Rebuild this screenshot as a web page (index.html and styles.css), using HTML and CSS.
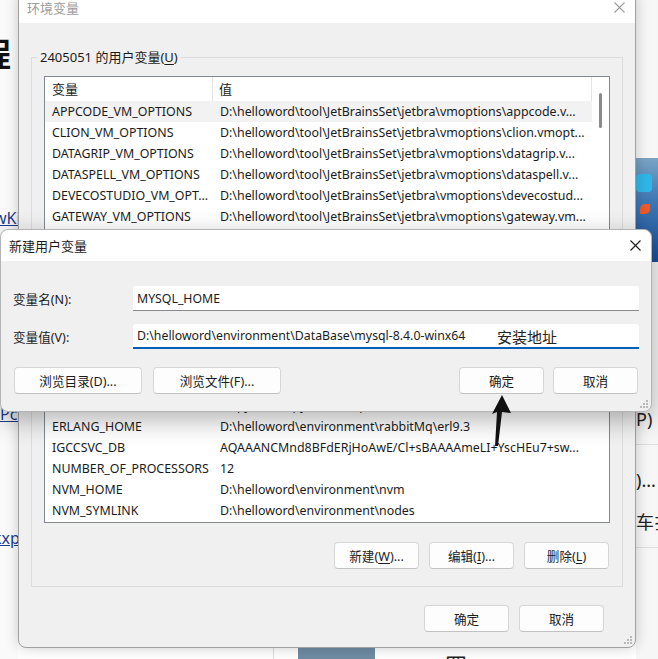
FILE: index.html
```html
<!DOCTYPE html>
<html lang="zh-CN">
<head>
  <meta charset="UTF-8" />
  <title>环境变量</title>
  <link rel="stylesheet" href="styles.css">
</head>
<body>
  <div class="desktop">
    <!-- page behind the dialogs -->
    <div class="bg-page">
      <div class="bg-left">
        <span class="bg-heading">程</span>
        <a class="bg-link link-1">wKi</a>
        <a class="bg-link link-2">Pcr</a>
        <a class="bg-link link-3">kxp</a>
      </div>
      <div class="bg-mid">
        <div class="bg-bottom">
          <span class="bg-rule"></span>
          <span class="bg-thumb"></span>
          <span class="bg-word">四 ⋯</span>
        </div>
      </div>
      <div class="bg-right">
        <div class="bg-pic"><span class="pic-cyan"></span><span class="pic-orange"></span></div>
        <span class="bg-text text-1">P)</span>
        <span class="bg-hr"></span>
        <span class="bg-text text-2">)...</span>
        <span class="bg-text text-3">车扌</span>
        <span class="bg-hr"></span>
      </div>
    </div>

    <!-- 环境变量 window -->
    <section class="window env-window">
      <header class="title-bar">
        <span class="title inactive">环境变量</span>
        <svg class="close-x inactive" width="11" height="11" viewBox="0 0 11 11"><path d="M0.5 0.5L10.5 10.5M10.5 0.5L0.5 10.5"/></svg>
      </header>
      <div class="env-body">
        <fieldset class="group">
          <legend>2405051 的用户变量(<u>U</u>)</legend>
          <div class="var-list">
            <div class="var-table">
              <div class="var-head">
                <span class="col-name">变量</span>
                <span class="col-value">值</span>
              </div>
              <div class="var-row active"><span class="col-name">APPCODE_VM_OPTIONS</span><span class="col-value">D:\helloword\tool\JetBrainsSet\jetbra\vmoptions\appcode.v...</span></div>
              <div class="var-row"><span class="col-name">CLION_VM_OPTIONS</span><span class="col-value">D:\helloword\tool\JetBrainsSet\jetbra\vmoptions\clion.vmopt...</span></div>
              <div class="var-row"><span class="col-name">DATAGRIP_VM_OPTIONS</span><span class="col-value">D:\helloword\tool\JetBrainsSet\jetbra\vmoptions\datagrip.v...</span></div>
              <div class="var-row"><span class="col-name">DATASPELL_VM_OPTIONS</span><span class="col-value">D:\helloword\tool\JetBrainsSet\jetbra\vmoptions\dataspell.v...</span></div>
              <div class="var-row"><span class="col-name">DEVECOSTUDIO_VM_OPT...</span><span class="col-value">D:\helloword\tool\JetBrainsSet\jetbra\vmoptions\devecostud...</span></div>
              <div class="var-row"><span class="col-name">GATEWAY_VM_OPTIONS</span><span class="col-value">D:\helloword\tool\JetBrainsSet\jetbra\vmoptions\gateway.vm...</span></div>
              <div class="var-row"><span class="col-name">GOLAND_VM_OPTIONS</span><span class="col-value">D:\helloword\tool\JetBrainsSet\jetbra\vmoptions\goland.vm...</span></div>
              <div class="var-row"><span class="col-name">IDEA_VM_OPTIONS</span><span class="col-value">D:\helloword\tool\JetBrainsSet\jetbra\vmoptions\idea.vmopti...</span></div>
              <div class="var-row"><span class="col-name">JETBRAINSCLIENT_VM_...</span><span class="col-value">D:\helloword\tool\JetBrainsSet\jetbra\vmoptions\jetbrainscl...</span></div>
              <div class="var-row"><span class="col-name">JETBRAINS_CLIENT_VM...</span><span class="col-value">D:\helloword\tool\JetBrainsSet\jetbra\vmoptions\jetbrains_c...</span></div>
              <div class="var-row"><span class="col-name">PHPSTORM_VM_OPTIONS</span><span class="col-value">D:\helloword\tool\JetBrainsSet\jetbra\vmoptions\phpstorm.v...</span></div>
              <div class="var-row"><span class="col-name">PYCHARM_VM_OPTIONS</span><span class="col-value">D:\helloword\tool\JetBrainsSet\jetbra\vmoptions\pycharm.v...</span></div>
              <div class="var-row"><span class="col-name">RIDER_VM_OPTIONS</span><span class="col-value">D:\helloword\tool\JetBrainsSet\jetbra\vmoptions\rider.vmopt...</span></div>
              <div class="var-row"><span class="col-name">RUBYMINE_VM_OPTIONS</span><span class="col-value">D:\helloword\tool\JetBrainsSet\jetbra\vmoptions\rubymine.v...</span></div>
              <div class="var-row"><span class="col-name">Path</span><span class="col-value">D:\pycharm\python\Scripts;D:\helloword\environment\...</span></div>
              <div class="var-row"><span class="col-name">ERLANG_HOME</span><span class="col-value">D:\helloword\environment\rabbitMq\erl9.3</span></div>
              <div class="var-row"><span class="col-name">IGCCSVC_DB</span><span class="col-value">AQAAANCMnd8BFdERjHoAwE/Cl+sBAAAAmeLI+YscHEu7+sw...</span></div>
              <div class="var-row"><span class="col-name">NUMBER_OF_PROCESSORS</span><span class="col-value">12</span></div>
              <div class="var-row"><span class="col-name">NVM_HOME</span><span class="col-value">D:\helloword\environment\nvm</span></div>
              <div class="var-row"><span class="col-name">NVM_SYMLINK</span><span class="col-value">D:\helloword\environment\nodes</span></div>
            </div>
            <div class="scrollbar"><span class="thumb"></span></div>
          </div>
          <div class="btn-row">
            <button class="btn">新建(<u>W</u>)...</button>
            <button class="btn">编辑(<u>I</u>)...</button>
            <button class="btn">删除(<u>L</u>)</button>
          </div>
        </fieldset>
        <div class="btn-row footer-row">
          <button class="btn">确定</button>
          <button class="btn">取消</button>
        </div>
      </div>
      <svg class="grip" width="8" height="8" viewBox="0 0 8 8"><path d="M6 0h2v2H6zM3 3h2v2H3zM6 3h2v2H6zM0 6h2v2H0zM3 6h2v2H3zM6 6h2v2H6z"/></svg>
    </section>

    <!-- 新建用户变量 dialog -->
    <section class="window new-var">
      <header class="title-bar">
        <span class="title">新建用户变量</span>
        <svg class="close-x" width="11" height="11" viewBox="0 0 11 11"><path d="M0.5 0.5L10.5 10.5M10.5 0.5L0.5 10.5"/></svg>
      </header>
      <div class="dialog-body">
        <div class="form-row">
          <label for="varName">变量名(N):</label>
          <input type="text" id="varName" value="MYSQL_HOME" />
        </div>
        <div class="form-row">
          <label for="varValue">变量值(V):</label>
          <input type="text" id="varValue" class="focused" value="D:\helloword\environment\DataBase\mysql-8.4.0-winx64" />
        </div>
        <div class="dialog-buttons">
          <div class="btn-group">
            <button class="btn wide">浏览目录(D)...</button>
            <button class="btn wide">浏览文件(F)...</button>
          </div>
          <div class="btn-group tight">
            <button class="btn">确定</button>
            <button class="btn">取消</button>
          </div>
        </div>
      </div>
      <span class="note">安装地址</span>
      <svg class="grip" width="8" height="8" viewBox="0 0 8 8"><path d="M6 0h2v2H6zM3 3h2v2H3zM6 3h2v2H6zM0 6h2v2H0zM3 6h2v2H3zM6 6h2v2H6z"/></svg>
    </section>

    <svg class="arrow" width="30" height="60" viewBox="0 0 30 60">
      <polygon points="14,5 23,23 14,22 10,56 7,56 9,22 4,24" />
    </svg>
  </div>
</body>
</html>
```

FILE: styles.css
```css
* { box-sizing: border-box; }
html, body { margin: 0; padding: 0; }
body {
  width: 658px;
  height: 659px;
  overflow: hidden;
  background: #fff;
  font-family: "Noto Sans", "Noto Sans CJK SC", sans-serif;
  font-size: 13px;
  color: #1b1b1b;
}
u { text-underline-offset: 2px; }
.desktop {
  position: relative;
  width: 658px;
  height: 659px;
  overflow: hidden;
}

/* background page */
.bg-page {
  position: absolute;
  inset: 0;
  display: flex;
}
.bg-left {
  width: 18px;
  overflow: hidden;
  display: flex;
  flex-direction: column;
  background: #fafafa;
}
.bg-heading {
  margin: 34px 0 0 -21px;
  font-family: "Noto Sans CJK SC", sans-serif;
  font-size: 32px;
  font-weight: 700;
  line-height: 36px;
  color: #111;
}
.bg-link {
  color: #1f3b8c;
  text-decoration: underline;
  font-size: 16px;
  line-height: 20px;
  white-space: nowrap;
}
.link-1 { margin: 138px 0 0 -6px; }
.link-2 { margin: 176px 0 0 0; }
.link-3 { margin: 104px 0 0 -7px; }
.bg-mid {
  flex: 1;
  display: flex;
  flex-direction: column;
  justify-content: flex-end;
}
.bg-bottom {
  height: 11px;
  display: flex;
  overflow: hidden;
}
.bg-rule { width: 1px; margin-left: 255px; background: #ddd; }
.bg-thumb { width: 77px; margin-left: 24px; background: #6f8ca3; }
.bg-word {
  margin-left: 70px;
  font-family: "Noto Sans CJK SC", sans-serif;
  font-size: 22px;
  line-height: 30px;
  color: #222;
}
.bg-right {
  width: 22px;
  overflow: hidden;
  display: flex;
  flex-direction: column;
  background: #f6f6f6;
}
.bg-pic {
  height: 104px;
  margin-top: 158px;
  background: linear-gradient(180deg, #7aa3c4 0%, #3f78b3 40%, #1b4f98 100%);
  display: flex;
  flex-direction: column;
}
.pic-cyan { height: 18px; width: 16px; margin-top: 16px; border-radius: 4px; background: #2fb6e8; }
.pic-orange { height: 10px; width: 10px; margin: 12px 0 0 4px; border-radius: 50% 0; background: #ee5a2a; }
.bg-text {
  font-size: 18px;
  line-height: 22px;
  white-space: nowrap;
  color: #222;
  font-family: "Noto Sans", "Noto Sans CJK SC", sans-serif;
}
.text-1 { margin-top: 146px; }
.bg-hr { height: 1px; margin-top: 14px; background: #ddd; }
.text-2 { margin-top: 24px; }
.text-3 { margin-top: 20px; }

/* windows */
.window {
  position: absolute;
  display: flex;
  flex-direction: column;
  background: #f0f0f0;
  border: 1px solid #a0a0a0;
  border-radius: 8px;
}
.title-bar {
  flex: none;
  height: 31px;
  display: flex;
  align-items: center;
  justify-content: space-between;
  padding: 0 10px 0 8px;
  background: #fff;
  border-radius: 8px 8px 0 0;
}
.title { font-size: 13px; }
.close-x { stroke: #1b1b1b; stroke-width: 1.1; fill: none; }
.inactive { color: #9c9c9c; stroke: #9c9c9c; }
.grip {
  position: absolute;
  right: 3px;
  bottom: 3px;
  fill: #b8b8b8;
}

.env-window {
  left: 18px;
  top: -9px;
  width: 618px;
  height: 657px;
  box-shadow: 0 0 14px rgba(0, 0, 0, 0.2);
}
.env-body {
  flex: 1;
  display: flex;
  flex-direction: column;
  padding: 26px 12px 0 12px;
}
.group {
  margin: 0;
  min-width: 0;
  padding: 10px 12px 17px 12px;
  border: 1px solid #dcdcdc;
}
.group legend {
  padding: 0 3px;
  margin-left: -7px;
  font-size: 13px;
  line-height: 17px;
}
.var-list {
  height: 447px;
  display: flex;
  background: #fff;
  border: 1px solid #828790;
  overflow: hidden;
  font-size: 12.4px;
}
.var-table {
  flex: 1;
  min-width: 0;
  display: flex;
  flex-direction: column;
}
.var-head, .var-row {
  display: flex;
  align-items: center;
  flex: none;
  white-space: nowrap;
}
.var-head { height: 24px; font-size: 13px; }
.var-row { height: 21px; }
.var-row.active { background: #f2f2f2; }
.col-name {
  width: 168px;
  flex: none;
  padding-left: 7px;
  overflow: hidden;
}
.col-value {
  flex: 1;
  min-width: 0;
  padding-left: 7px;
  overflow: hidden;
}
.var-head span { height: 24px; line-height: 24px; }
.var-head .col-name { border-right: 1px solid #e5e5e5; }
.var-head .col-value { border-right: 1px solid #e5e5e5; padding-left: 6px; }
.scrollbar {
  width: 17px;
  flex: none;
  display: flex;
  flex-direction: column;
}
.thumb {
  width: 3px;
  height: 35px;
  margin: 16px 0 0 7px;
  border-radius: 2px;
  background: #8a8a8a;
}

.btn-row {
  display: flex;
  justify-content: flex-end;
  gap: 10px;
  margin: 19px 1px 0 0;
}
.footer-row { margin: 18px 19px 0 0; }
.btn {
  width: 85px;
  height: 27px;
  padding: 0;
  font-family: "Noto Sans", "Noto Sans CJK SC", sans-serif;
  font-size: 12.6px;
  color: #1b1b1b;
  background: #fdfdfd;
  border: 1px solid #d6d6d6;
  border-bottom-color: #c2c2c2;
  border-radius: 4px;
}
.btn.wide { width: 128px; }

/* new variable dialog */
.new-var {
  left: 0;
  top: 229px;
  width: 652px;
  height: 183px;
  border-color: #b4b4b4;
  box-shadow: 0 8px 26px rgba(0, 0, 0, 0.3);
}
.dialog-body {
  flex: 1;
  display: flex;
  flex-direction: column;
  gap: 13px;
  padding: 25px 12px 0 12px;
}
.form-row {
  display: flex;
  align-items: center;
}
.form-row label {
  width: 120px;
  flex: none;
  font-size: 12.6px;
}
.form-row input {
  flex: 1;
  min-width: 0;
  height: 25px;
  padding: 0 4px;
  font-family: "Noto Sans", "Noto Sans CJK SC", sans-serif;
  font-size: 12.3px;
  color: #1b1b1b;
  background: #fff;
  border: none;
  border-bottom: 1px solid #8a8a8a;
  border-radius: 3px 3px 0 0;
  outline: none;
}
.form-row input.focused { border-bottom: 2px solid #005fb8; }
.dialog-buttons {
  display: flex;
  justify-content: space-between;
  margin: 5px 1px 0 1px;
}
.btn-group { display: flex; gap: 11px; }
.btn-group.tight { gap: 9px; }
.note {
  position: absolute;
  left: 496px;
  top: 96px;
  font-family: "Noto Sans CJK SC", sans-serif;
  font-size: 15px;
  color: #222;
}
.arrow {
  position: absolute;
  left: 488px;
  top: 390px;
  fill: #111;
}
```
